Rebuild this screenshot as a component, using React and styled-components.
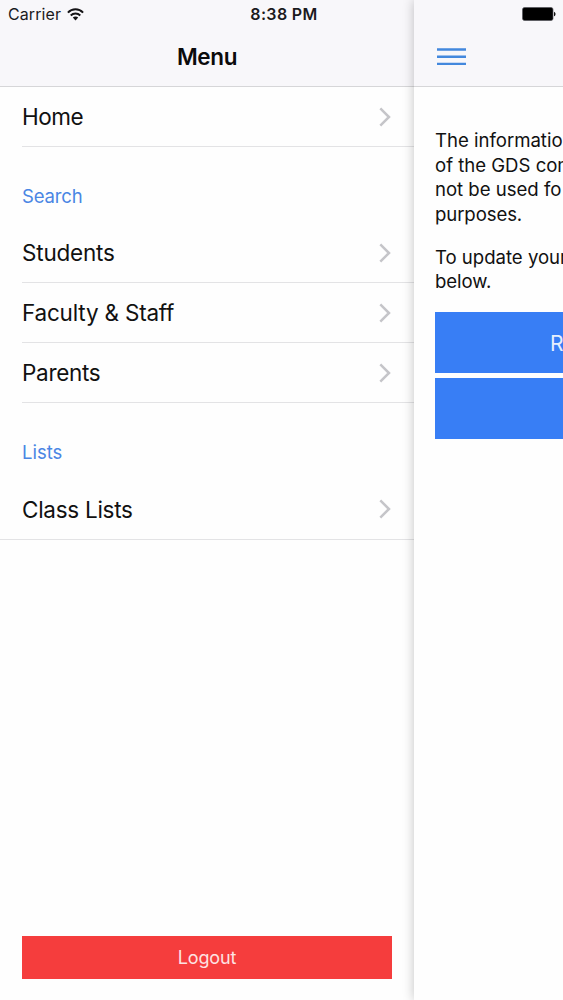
import React from "react";
import styled, { createGlobalStyle } from "styled-components";

const GlobalStyle = createGlobalStyle`
  * { box-sizing: border-box; }
  body {
    margin: 0;
    background: #fff;
    font-family: Inter, "Liberation Sans", sans-serif;
    color: #111;
    overflow: hidden;
  }
`;

const Screen = styled.div`
  position: relative;
  display: flex;
  width: 563px;
  height: 1000px;
  overflow: hidden;
  background: #fefefe;
`;

const StatusBar = styled.div`
  position: absolute;
  z-index: 3;
  top: 0;
  left: 0;
  width: 100%;
  height: 28px;
  display: grid;
  grid-template-columns: 1fr auto 1fr;
  align-items: center;
  padding: 0 7px 0 8px;
  color: #1b1a1d;
`;

const Carrier = styled.div`
  display: flex;
  align-items: center;
  gap: 6px;
  font-size: 16px;
  letter-spacing: 0.1px;
`;

const Time = styled.div`
  padding-left: 4px;
  font-size: 16px;
  font-weight: 600;
  letter-spacing: 0.35px;
`;

const Battery = styled.svg`
  justify-self: end;
`;

const SideMenu = styled.aside`
  display: flex;
  flex-direction: column;
  width: 414px;
  flex: none;
`;

const Main = styled.main`
  position: relative;
  z-index: 1;
  flex: none;
  width: 563px;
  margin-left: -0.5px;
  background: #fefefe;
  box-shadow: 0 0 11px rgba(0, 0, 0, 0.24);
`;

const Header = styled.header`
  display: flex;
  align-items: center;
  justify-content: ${(p) => (p.$start ? "flex-start" : "center")};
  height: 87px;
  padding: ${(p) => (p.$start ? "27px 0 0 23.5px" : "27px 0 0")};
  background: #f8f7fa;
  border-bottom: 1px solid #d6d6d8;
`;

const Title = styled.h1`
  margin: 0;
  font-size: 22.5px;
  font-weight: 600;
  letter-spacing: -0.35px;
  color: #0b0b0c;
`;

const SectionTitle = styled.h2`
  display: flex;
  align-items: center;
  height: 76px;
  margin: 0;
  padding: 21px 22px 0;
  font-size: 18.5px;
  font-weight: 400;
  letter-spacing: ${(p) => p.$tracking || "0"};
  color: #4a86e4;
`;

const Row = styled.a`
  display: flex;
  align-items: center;
  justify-content: space-between;
  height: ${(p) => (p.$last ? "61px" : "60px")};
  margin-left: ${(p) => (p.$last ? "0" : "22px")};
  padding-left: ${(p) => (p.$last ? "22px" : "0")};
  padding-right: 23px;
  border-bottom: 1px solid #e3e3e5;
  font-size: 22.5px;
  letter-spacing: ${(p) => p.$tracking || "-0.2px"};
`;

const Logout = styled.button`
  height: 43px;
  margin: auto 22px 21px;
  width: 370px;
  border: 0;
  background: #f53d3d;
  color: #fde3e3;
  font-family: inherit;
  font-size: 18px;
  letter-spacing: -0.1px;
`;

const Content = styled.div`
  padding: 41px 0 0 21.5px;
`;

const Paragraph = styled.p`
  margin: 0 0 18.5px;
  font-size: 18.6px;
  line-height: 24.5px;
  white-space: nowrap;
`;

const Line = styled.span`
  display: block;
  letter-spacing: ${(p) => p.$tracking || "-0.02px"};
`;

const Action = styled.button`
  display: flex;
  align-items: center;
  width: 519px;
  height: 61px;
  margin: 0 0 5px;
  padding: 2px 0 0 115px;
  border: 0;
  background: #387ef5;
  color: #e6effd;
  font-family: inherit;
  font-size: 21px;
`;

const Chevron = () => (
  <svg width="12" height="20" viewBox="0 0 12 20" fill="none">
    <path d="M1.3 1.3 L10 10 L1.3 18.7" stroke="#c5c5c9" strokeWidth="2.5" />
  </svg>
);

const Wifi = () => (
  <svg width="17" height="13" viewBox="0 0 17 13" fill="none" stroke="#151416">
    <path d="M0.9 4.6 C5.1 0.2 11.9 0.2 16.1 4.6" strokeWidth="2" />
    <path d="M3.7 7.5 C6.4 4.8 10.6 4.8 13.3 7.5" strokeWidth="1.9" />
    <path d="M8.5 12.4 L5.8 9.6 C7.3 8.2 9.7 8.2 11.2 9.6 Z" fill="#151416" stroke="none" />
  </svg>
);

const Hamburger = () => (
  <svg width="29" height="18" viewBox="0 0 29 18">
    <path d="M0 1.5H29M0 8.7H29M0 15.9H29" stroke="#4388dd" strokeWidth="2.4" />
  </svg>
);

const MenuRow = ({ label, tracking, last }) => (
  <Row $tracking={tracking} $last={last}>
    {label}
    <Chevron />
  </Row>
);

export default function App() {
  return (
    <>
      <GlobalStyle />
      <Screen>
        <StatusBar>
          <Carrier>
            Carrier
            <Wifi />
          </Carrier>
          <Time>8:38 PM</Time>
          <Battery width="34" height="14" viewBox="0 0 34 14">
            <rect x="0.5" y="0.5" width="30.5" height="13" rx="2" fill="#000" stroke="#55545a" strokeWidth="0.7" />
            <path d="M32 4.7 C34 5.5 34 8.5 32 9.3 Z" fill="#111" />
          </Battery>
        </StatusBar>
        <SideMenu>
          <Header>
            <Title>Menu</Title>
          </Header>
          <MenuRow label="Home" tracking="-0.5px" />
          <SectionTitle $tracking="-0.15px">Search</SectionTitle>
          <MenuRow label="Students" />
          <MenuRow label="Faculty &amp; Staff" />
          <MenuRow label="Parents" tracking="-0.3px" />
          <SectionTitle>Lists</SectionTitle>
          <MenuRow label="Class Lists" tracking="-0.27px" last />
          <Logout>Logout</Logout>
        </SideMenu>
        <Main>
          <Header $start>
            <Hamburger />
          </Header>
          <Content>
            <Paragraph>
              <Line>The informatio</Line>
              <Line>of the GDS com</Line>
              <Line>not be used fo</Line>
              <Line $tracking="-0.1px">purposes.</Line>
            </Paragraph>
            <Paragraph>
              <Line>To update your</Line>
              <Line $tracking="-0.1px">below.</Line>
            </Paragraph>
            <Action>R</Action>
            <Action />
          </Content>
        </Main>
      </Screen>
    </>
  );
}
